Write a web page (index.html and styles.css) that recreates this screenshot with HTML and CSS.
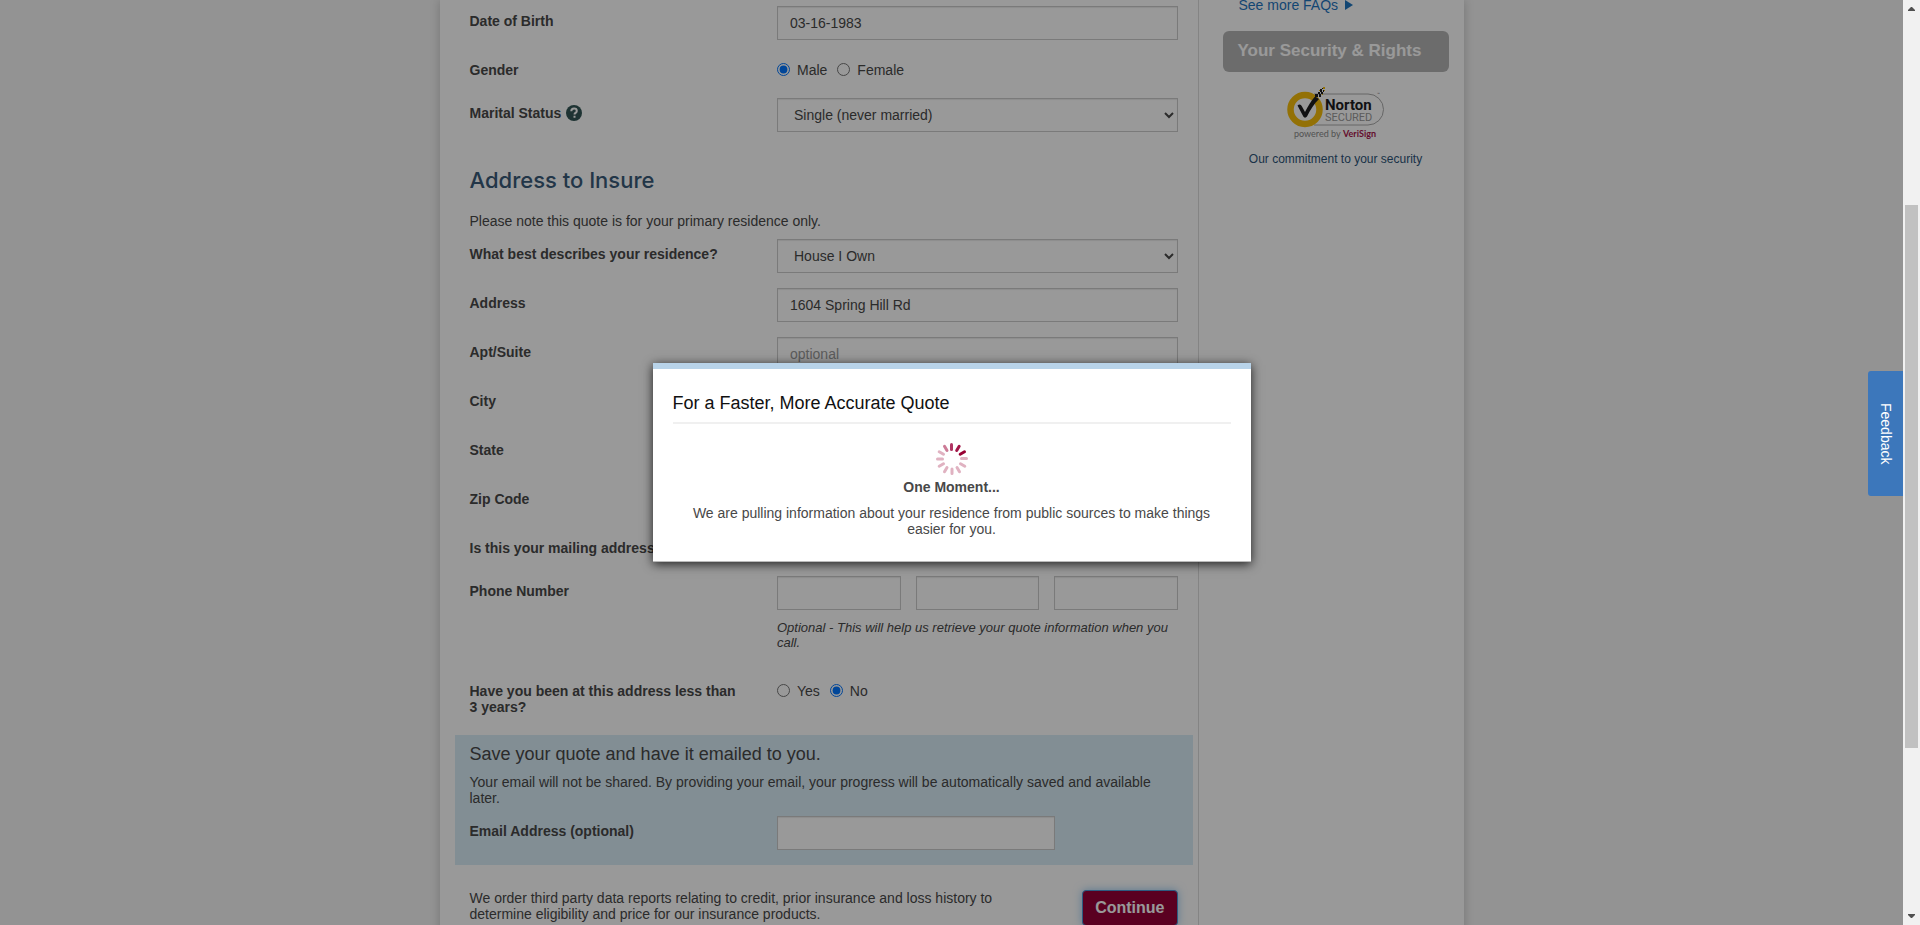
FILE: index.html
```html
<!DOCTYPE html>
<html lang="en">
<head>
<meta charset="utf-8">
<title>Insurance Quote</title>
<link rel="stylesheet" href="styles.css">
</head>
<body>
<div class="screen">
  <div class="viewport">
    <div class="page">
      <main class="main">
        <form class="form">
          <div class="row">
            <label class="label" for="dob">Date of Birth</label>
            <div class="field"><input class="control" id="dob" type="text" value="03-16-1983"></div>
          </div>
          <div class="row" role="radiogroup" aria-labelledby="gender-label">
            <span class="label" id="gender-label">Gender</span>
            <div class="field choices">
              <label class="choice"><input type="radio" name="gender" checked>Male</label>
              <label class="choice"><input type="radio" name="gender">Female</label>
            </div>
          </div>
          <div class="row">
            <label class="label" for="marital">Marital Status
              <svg class="help" viewBox="0 0 16 16" aria-hidden="true"><circle cx="8" cy="8" r="8"/><path d="M5.3 6.3C5.3 4.6 6.4 3.6 8.1 3.6s2.7 1 2.7 2.4c0 1.9-2.3 1.8-2.3 3.4M8.5 10.7v2.1"/></svg>
            </label>
            <div class="field"><select class="control select" id="marital"><option>Single (never married)</option></select></div>
          </div>
          <h2 class="heading">Address to Insure</h2>
          <p class="note">Please note this quote is for your primary residence only.</p>
          <div class="row">
            <label class="label" for="residence">What best describes your residence?</label>
            <div class="field"><select class="control select" id="residence"><option>House I Own</option></select></div>
          </div>
          <div class="row">
            <label class="label" for="address">Address</label>
            <div class="field"><input class="control" id="address" type="text" value="1604 Spring Hill Rd"></div>
          </div>
          <div class="row">
            <label class="label" for="apt">Apt/Suite</label>
            <div class="field"><input class="control" id="apt" type="text" placeholder="optional"></div>
          </div>
          <div class="row">
            <label class="label" for="city">City</label>
            <div class="field"><input class="control" id="city" type="text"></div>
          </div>
          <div class="row">
            <label class="label" for="state">State</label>
            <div class="field"><select class="control select" id="state"><option></option></select></div>
          </div>
          <div class="row">
            <label class="label" for="zip">Zip Code</label>
            <div class="field"><input class="control" id="zip" type="text"></div>
          </div>
          <div class="row">
            <span class="label">Is this your mailing address?</span>
            <div class="field choices"></div>
          </div>
          <div class="row phone-row">
            <label class="label" for="phone1">Phone Number</label>
            <div class="field">
              <div class="phone">
                <input class="control" id="phone1" type="tel" aria-label="Area code">
                <input class="control" type="tel" aria-label="Prefix">
                <input class="control" type="tel" aria-label="Line number">
              </div>
              <p class="hint">Optional - This will help us retrieve your quote information when you call.</p>
            </div>
          </div>
          <div class="row years-row" role="radiogroup" aria-labelledby="years-label">
            <span class="label" id="years-label">Have you been at this address less than 3&nbsp;years?</span>
            <div class="field choices">
              <label class="choice"><input type="radio" name="years">Yes</label>
              <label class="choice"><input type="radio" name="years" checked>No</label>
            </div>
          </div>
          <section class="save">
            <h3 class="save-title">Save your quote and have it emailed to you.</h3>
            <p class="save-text">Your email will not be shared. By providing your email, your progress will be automatically saved and available later.</p>
            <div class="row">
              <label class="label" for="email">Email Address (optional)</label>
              <div class="field"><input class="control email" id="email" type="email"></div>
            </div>
          </section>
          <div class="submit">
            <p class="disclosure">We order third party data reports relating to credit, prior insurance and loss history to determine eligibility and price for our insurance products.</p>
            <button class="continue" type="button">Continue</button>
          </div>
        </form>
      </main>
      <aside class="side">
        <a class="faq" href="#">See more FAQs <svg class="faq-arrow" viewBox="0 0 8 10" aria-hidden="true"><path d="M0 0l8 5-8 5z"/></svg></a>
        <h2 class="side-title">Your Security &amp; Rights</h2>
        <svg class="norton" viewBox="0 0 98 54" role="img" aria-label="Norton Secured, powered by VeriSign">
          <path d="M27 8h54a15.500 15.500 0 0 1 0 31H27" fill="#fff" stroke="#aaa"/>
          <circle cx="18" cy="23.500" r="14.500" fill="#fff" stroke="#f5bd0b" stroke-width="6.500"/>
          <path d="M10.500 19.500c2-2 3.500-1 4.500 1l3 5.500c3-6 6-11 10-15.500l4 2.500c-5 5-8.500 10.500-12 17.500-1 1.500-3 1.500-3.700 0z" fill="#1d1d1f"/>
          <path d="M28 8h3v3h-3zM32 8h2v3h-2zM31 6h2v2h-2zM34 6h2v2h-2zM33 3h2v3h-2zM36 4h1v2h-1zM35 2h1v1h-1z" fill="#1d1d1f"/>
          <path d="M27 10h1v1h-1zM32 4h1v1h-1zM36 1h2v2h-2zM35 8h1v1h-1zM37 4h1v1h-1z" fill="#f5bd0b"/>
          <text x="38" y="24" class="n-name">Norton</text>
          <text x="38" y="35" class="n-secured">SECURED</text>
          <text x="90" y="10" class="n-tm">™</text>
          <text x="7" y="51" class="n-by">powered by</text>
          <text x="56" y="51" class="n-veri">VeriSign</text>
        </svg>
        <a class="commit" href="#">Our commitment to your security</a>
      </aside>
    </div>
    <div class="overlay">
      <div class="modal" role="dialog" aria-labelledby="modal-title">
        <h2 class="modal-title" id="modal-title">For a Faster, More Accurate Quote</h2>
        <svg class="spinner" viewBox="-16 -16 32 32" aria-hidden="true">
          <g stroke-width="3" stroke-linecap="round">
            <g stroke="#e0b2c1">
              <path d="M9.500-.5h5M8.500 4.700l4.300 2.500M5 8.500l2.500 4.300M0 10v4.500M-5 8.500l-2.500 4.300M-8.500 4.700l-4.300 2.500M-9.500 0h-5M-8.500-4.700l-4.300-2.500"/>
            </g>
            <path d="M-5-8.500l-2.500-4.300" stroke="#cc7b96"/>
            <path d="M-.5-9.500v-5" stroke="#b03563"/>
            <path d="M4.700-8.500l2.500-4.300" stroke="#a21748"/>
            <path d="M8.200-4.700l4.300-2.500" stroke="#990033"/>
          </g>
        </svg>
        <strong class="moment">One Moment...</strong>
        <p class="modal-text">We are pulling information about your residence from public sources to make things easier for you.</p>
      </div>
    </div>
    <button class="feedback" type="button">Feedback</button>
  </div>
  <div class="scrollbar" aria-hidden="true">
    <svg class="scroll-arrow" viewBox="0 0 7 4"><path d="M0 4v-1l3-3h1l3 3v1z"/></svg>
    <div class="track"><div class="thumb"></div></div>
    <svg class="scroll-arrow" viewBox="0 0 7 4"><path d="M0 0v1l3 3h1l3-3v-1z"/></svg>
  </div>
</div>
</body>
</html>
```

FILE: styles.css
```css
* { box-sizing: border-box; }

body {
  margin: 0;
  background: #f5f5f5;
  color: #484848;
  font: 14px/16px "Liberation Sans", Arial, sans-serif;
}

h2, h3, p { margin: 0; font-weight: 400; }
a { text-decoration: none; }
input, select, button { font: inherit; color: inherit; }

.screen { display: flex; height: 100vh; overflow: hidden; }
.viewport { position: relative; flex: 1; overflow: hidden; }

.page {
  display: flex;
  max-width: 1024px;
  min-height: 100%;
  margin: 0 auto;
  background: #fff;
  box-shadow: 0 0 10px rgba(0, 0, 0, .2);
}

.main { flex: 1; padding: 6px 5px 20px 15px; border-right: 1px solid #ddd; }

.row {
  display: grid;
  grid-template-columns: minmax(0, 5fr) minmax(0, 7fr);
  margin-bottom: 15px;
}
.label { padding: 7px 15px 0; font-weight: 700; }
.field { padding: 0 15px; }

.control {
  display: block;
  width: 100%;
  height: 34px;
  padding: 6px 12px;
  border: 1px solid #ccc;
  border-radius: 0;
  background-color: #fff;
  box-shadow: inset 0 1px 1px rgba(0, 0, 0, .08);
}
.control::placeholder { color: #999; opacity: 1; }

.choices { display: flex; gap: 10px; min-height: 28px; padding-top: 7px; }
.choice { display: flex; gap: 7px; }
.choice input { width: 13px; height: 13px; margin: 1px 0 0; }

.help { width: 16px; height: 16px; margin-left: 1px; vertical-align: -3px; fill: #335655; }
.help path { fill: none; stroke: #fff; stroke-width: 2; }

.heading {
  padding: 18px 15px 0;
  color: #3a5a78;
  font: 500 22px/30px Inter, sans-serif;
}
.note { padding: 18px 15px 10px; }

.phone { display: flex; gap: 15px; }
.phone .control { flex: 1; min-width: 0; }
.hint { margin-top: 10px; font-size: 13px; line-height: 15px; font-style: italic; }
.phone-row { margin-bottom: 26px; }
.years-row { margin-bottom: 20px; }

.save { padding: 9px 0 1px; background: #d9edf7; }
.save-title { padding: 0 15px; font-size: 18px; line-height: 20px; }
.save-text { padding: 10px 15px; }
.save .row { margin-bottom: 14px; }
.email { max-width: 278px; }

.submit {
  display: flex;
  justify-content: space-between;
  align-items: flex-start;
  padding: 25px 15px 0;
}
.disclosure { max-width: 555px; }
.continue {
  height: 36px;
  padding: 0 12px;
  border: 1px solid #4b9ad8;
  border-radius: 4px;
  background: #960037;
  box-shadow: 0 0 8px rgba(82, 168, 236, .6);
  color: #fff;
  font-size: 16px;
  font-weight: 700;
}

.side {
  display: flex;
  flex-direction: column;
  flex: 0 0 265px;
  margin-top: -3px;
  padding: 0 15px 0 24px;
}
.faq { padding-left: 16px; color: #1f75c0; }
.faq-arrow { width: 8px; height: 10px; margin-left: 3px; fill: currentColor; }
.side-title {
  margin-top: 18px;
  padding: 10px 15px 11px;
  border-radius: 6px;
  background: #b5b5b5;
  color: #fff;
  font-size: 17px;
  font-weight: 700;
  line-height: 20px;
}
.norton { align-self: center; width: 98px; height: 54px; margin-top: 14px; }
.n-name { font: 700 15px Roboto, sans-serif; fill: #1d1d1f; }
.n-secured { font: 400 11px Roboto, sans-serif; fill: #999; }
.n-tm { font: 400 5px Roboto, sans-serif; fill: #777; }
.n-by { font: 400 9px Lato, sans-serif; fill: #888; }
.n-veri { font: 700 9px Lato, sans-serif; fill: #a8164d; }
.commit { margin-top: 11px; text-align: center; color: #2d5478; font-size: 12px; }

.overlay {
  position: absolute;
  inset: 0;
  display: flex;
  align-items: center;
  justify-content: center;
  background: rgba(0, 0, 0, .4);
}
.modal {
  display: flex;
  flex-direction: column;
  align-items: center;
  width: 598px;
  padding: 24px 20px;
  border-top: 6px solid #b8d3e9;
  border-bottom: 1px solid #bbb;
  background: #fff;
  box-shadow: 0 2px 10px rgba(0, 0, 0, .8);
  text-align: center;
}
.modal-title {
  align-self: stretch;
  padding-bottom: 9px;
  border-bottom: 2px solid #f0f0f0;
  color: #111;
  font-size: 18px;
  line-height: 20px;
  text-align: left;
}
.spinner { width: 32px; height: 32px; margin: 19px 0 4px; }
.modal-text { padding: 10px 20px 0; }

.feedback {
  position: absolute;
  top: 371px;
  right: 0;
  width: 35px;
  height: 125px;
  padding: 0;
  border: 0;
  border-radius: 3px 0 0 3px;
  background: #3c77bb;
  color: #fff;
  writing-mode: vertical-rl;
}

.scrollbar {
  display: flex;
  flex-direction: column;
  align-items: center;
  gap: 7px;
  width: 17px;
  padding: 7px 2px;
  background: #f1f1f1;
}
.scroll-arrow { width: 7px; height: 4px; fill: #505050; }
.track { display: flex; flex-direction: column; flex: 1; align-self: stretch; }
.track::before { content: ""; flex: 187; }
.track::after { content: ""; flex: 159; }
.thumb { flex: 543; background: #c1c1c1; }
```
